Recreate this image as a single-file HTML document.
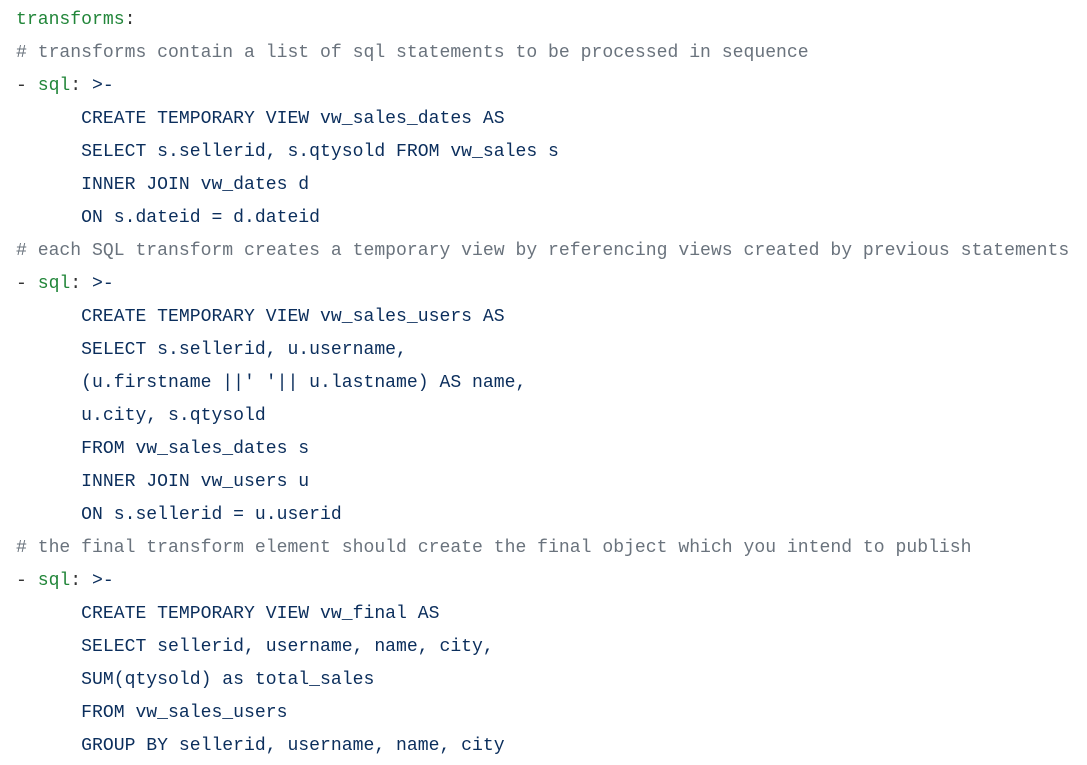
<!DOCTYPE html>
<html><head><meta charset="utf-8"><style>
html,body{margin:0;padding:0;background:#fff;width:1087px;height:765px;overflow:hidden}
pre{margin:0;padding:4px 0 0 16px;font-family:"Liberation Mono",monospace;font-size:18.1px;line-height:33px;color:#0b2e5c;white-space:pre}
.k{color:#22863a}.c{color:#6a737d}.p{color:#333}
</style></head><body><pre><span class="k">transforms</span><span class="p">:</span>
<span class="c"># transforms contain a list of sql statements to be processed in sequence</span>
<span class="p">- </span><span class="k">sql</span><span class="p">: </span>&gt;-
      CREATE TEMPORARY VIEW vw_sales_dates AS
      SELECT s.sellerid, s.qtysold FROM vw_sales s
      INNER JOIN vw_dates d
      ON s.dateid = d.dateid
<span class="c"># each SQL transform creates a temporary view by referencing views created by previous statements</span>
<span class="p">- </span><span class="k">sql</span><span class="p">: </span>&gt;-
      CREATE TEMPORARY VIEW vw_sales_users AS
      SELECT s.sellerid, u.username,
      (u.firstname ||' '|| u.lastname) AS name,
      u.city, s.qtysold
      FROM vw_sales_dates s
      INNER JOIN vw_users u
      ON s.sellerid = u.userid
<span class="c"># the final transform element should create the final object which you intend to publish</span>
<span class="p">- </span><span class="k">sql</span><span class="p">: </span>&gt;-
      CREATE TEMPORARY VIEW vw_final AS
      SELECT sellerid, username, name, city,
      SUM(qtysold) as total_sales
      FROM vw_sales_users
      GROUP BY sellerid, username, name, city</pre></body></html>
